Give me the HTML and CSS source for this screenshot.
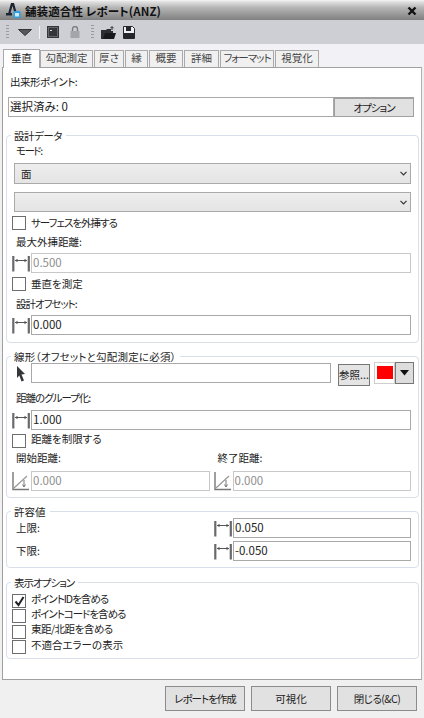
FILE: index.html
```html
<!DOCTYPE html>
<html lang="ja">
<head>
<meta charset="utf-8">
<title>舗装適合性レポート(ANZ)</title>
<link rel="stylesheet" href="styles.css">
</head>
<body>
<svg class="defs" width="0" height="0">
  <symbol id="dist" viewBox="0 0 18 20">
    <path d="M1.300 3v15.500M16.800 3v15.500" stroke="#6a6a6e" stroke-width="2.200" fill="none"/>
    <path d="M3 7.500h12" stroke="#555" stroke-width="1" fill="none"/>
    <path d="M3 7.500l2.500-1.700v3.400zM15 7.500l-2.500-1.700v3.400z" fill="#555"/>
  </symbol>
  <symbol id="slope" viewBox="0 0 18 20">
    <path d="M1 1v17.500h16" stroke="#777" stroke-width="1.400" fill="none"/>
    <path d="M2 17L15 5" stroke="#999" stroke-width="1.200" fill="none"/>
    <path d="M12 9v7M10.500 13.500l1.500 2.500 1.500-2.500" stroke="#777" fill="none"/>
  </symbol>
</svg>
<div class="window">
  <header class="titlebar">
    <svg class="appicon" width="15" height="15" viewBox="0 0 15 15">
      <path d="M2 11L5 0h3l3 11H8.800L6.500 3 4.200 11z" fill="#1d2433"/>
      <path d="M0 10h6v2.500H0z" fill="#1d2433"/>
      <rect x="7.500" y="8" width="7" height="7" rx="1" fill="#2f9fe0"/>
      <rect x="9" y="10" width="4" height="3.500" fill="#cfeaf8"/>
    </svg>
    <span class="title">舗装適合性 レポート(ANZ)</span>
    <svg class="close" width="10" height="10" viewBox="0 0 10 10"><path d="M1.500 1.500l7 7M8.500 1.500l-7 7" stroke="#111" stroke-width="2.400"/></svg>
  </header>
  <div class="toolbar">
    <span class="grip"></span>
    <svg class="tool tri" width="14" height="7" viewBox="0 0 14 7"><path d="M.5.500h13L7 6.500z" fill="#55575c" stroke="#333"/></svg>
    <span class="sep"></span>
    <svg class="tool" width="12" height="12" viewBox="0 0 12 12"><rect x=".5" y=".5" width="11" height="11" fill="#666" stroke="#33363b"/><rect x="2" y="2" width="8" height="8" fill="#33363b"/><path d="M3 4.500h2" stroke="#ddd"/></svg>
    <svg class="tool lock" width="10" height="12" viewBox="0 0 10 12"><path d="M2.500 5V3a2.500 2.500 0 0 1 5 0v2" fill="none" stroke="#7b7d82" stroke-width="1.400"/><rect x=".5" y="5" width="9" height="7" fill="#a3a5a9"/></svg>
    <span class="grip second"></span>
    <svg class="tool" width="15" height="13" viewBox="0 0 15 13"><path d="M0 4h5l1-1h4v2h2v8H0z" fill="#2b2d33"/><path d="M2 13l2-6h11l-2 6z" fill="#17181c"/><path d="M11 4V1M9.500 2.200L11 .5l1.500 1.700" stroke="#2b2d33" fill="none"/></svg>
    <svg class="tool save" width="12" height="13" viewBox="0 0 12 13"><path d="M.5.500h9l2 2v10H.5z" fill="#f0f0f2" stroke="#24262b"/><rect x="3" y="1" width="5" height="4" fill="#24262b"/><rect x="1" y="7" width="10" height="5.500" fill="#24262b"/></svg>
  </div>
  <nav class="tabs">
    <span class="tab active">垂直</span>
    <span class="tab w53">勾配測定</span>
    <span class="tab w30">厚さ</span>
    <span class="tab w23">縁</span>
    <span class="tab w34">概要</span>
    <span class="tab w35">詳細</span>
    <span class="tab w54 tight">フォーマット</span>
    <span class="tab w44">視覚化</span>
  </nav>
  <main class="panel">
    <div class="label first slight">出来形ポイント:</div>
    <div class="selrow">
      <div class="field selected">選択済み: 0</div>
      <button class="btn option tight" type="button">オプション</button>
    </div>

    <fieldset class="group design">
      <legend class="slight">設計データ</legend>
      <div class="label mode extra">モード:</div>
      <div class="select">面<svg class="chev" width="7" height="5" viewBox="0 0 7 5"><path d="M.5.800l3 3 3-3" fill="none" stroke="#333" stroke-width="1.200"/></svg></div>
      <div class="select second"><svg class="chev" width="7" height="5" viewBox="0 0 7 5"><path d="M.5.800l3 3 3-3" fill="none" stroke="#333" stroke-width="1.200"/></svg></div>
      <label class="check c1 tight"><span class="box"></span>サーフェスを外挿する</label>
      <div class="label l2">最大外挿距離:</div>
      <div class="inrow"><svg class="ico"><use href="#dist"/></svg><div class="field grow disabled">0.500</div></div>
      <label class="check c2"><span class="box"></span>垂直を測定</label>
      <div class="label l3 tight">設計オフセット:</div>
      <div class="inrow"><svg class="ico"><use href="#dist"/></svg><div class="field grow">0.000</div></div>
    </fieldset>

    <fieldset class="group align">
      <legend class="wide">線形（オフセットと勾配測定に必須）</legend>
      <div class="alignrow">
        <svg class="ico arrow" viewBox="0 0 18 20"><path d="M5 2l8 8-3.500.500 2.500 6-2.500 1-2.200-6L5 14z" fill="#33363b"/></svg>
        <div class="field alignfield"></div>
        <button class="btn browse" type="button">参照...</button>
        <div class="colour"><span class="swatch"><span class="red"></span></span><span class="drop"><svg width="9" height="6" viewBox="0 0 9 6"><path d="M0 0h9L4.500 5.500z" fill="#111"/></svg></span></div>
      </div>
      <div class="label l4 tight">距離のグループ化:</div>
      <div class="inrow in5"><svg class="ico"><use href="#dist"/></svg><div class="field grow">1.000</div></div>
      <label class="check c3"><span class="box"></span><span class="raised">距離を制限する</span></label>
      <div class="two">
        <div class="col">
          <div class="label">開始距離:</div>
          <div class="inrow"><svg class="ico"><use href="#slope"/></svg><div class="field grow disabled">0.000</div></div>
        </div>
        <div class="col">
          <div class="label">終了距離:</div>
          <div class="inrow"><svg class="ico"><use href="#slope"/></svg><div class="field grow disabled">0.000</div></div>
        </div>
      </div>
    </fieldset>

    <fieldset class="group tol">
      <legend>許容値</legend>
      <div class="tolrow"><span class="tollabel">上限:</span><svg class="ico"><use href="#dist"/></svg><div class="field grow">0.050</div></div>
      <div class="tolrow low"><span class="tollabel">下限:</span><svg class="ico"><use href="#dist"/></svg><div class="field grow">-0.050</div></div>
    </fieldset>

    <fieldset class="group show">
      <legend class="tight">表示オプション</legend>
      <label class="check s tight"><span class="box"><svg width="11" height="11" viewBox="0 0 11 11"><path d="M1.500 5.500l3 3.500 5-8" fill="none" stroke="#222" stroke-width="2"/></svg></span><span class="raised">ポイントIDを含める</span></label>
      <label class="check s tight"><span class="box"></span><span class="raised">ポイントコードを含める</span></label>
      <label class="check s slight"><span class="box"></span><span class="raised">東距/北距を含める</span></label>
      <label class="check s"><span class="box"></span><span class="raised">不適合エラーの表示</span></label>
    </fieldset>
  </main>
  <footer class="footer">
    <button class="btn foot tight" type="button">レポートを作成</button>
    <button class="btn foot" type="button">可視化</button>
    <button class="btn foot slight" type="button">閉じる(&amp;C)</button>
  </footer>
</div>
</body>
</html>
```
FILE: styles.css
```css
* { box-sizing: border-box; }
html, body { margin: 0; padding: 0; }
body {
  width: 424px;
  height: 718px;
  overflow: hidden;
  background: #f0f0f0;
  font-family: "Noto Sans CJK JP", "Noto Sans", sans-serif;
  font-size: 10.500px;
  line-height: 14px;
  color: #222;
  font-feature-settings: "palt";
}
.tight { letter-spacing: -1px; }
.slight { letter-spacing: -.5px; }
.extra { letter-spacing: -1.500px; }
.wide { letter-spacing: .2px; }
.defs { position: absolute; }
.window { display: flex; flex-direction: column; height: 718px; padding-top: 1px; }

.titlebar {
  height: 19px;
  display: flex;
  align-items: center;
  padding: 0 5px;
  background: linear-gradient(#e6e6e6, #b5b5b5 35%, #808080);
}
.appicon { margin-right: 4px; margin-left: 1px; }
.title { font-weight: 700; font-size: 11.500px; letter-spacing: .1px; color: #111; flex: 1; }
.close { margin-right: 2px; }

.toolbar {
  height: 24px;
  display: flex;
  align-items: center;
  padding-left: 6px;
  background: #cdcfd4;
}
.grip { width: 3px; height: 15px; background: repeating-linear-gradient(#9a9a9a 0 1px, transparent 1px 3px); }
.grip.second { margin-left: 11px; }
.sep { width: 1px; height: 13px; margin-left: 7px; background: #f2f2f2; }
.tool { margin-left: 7px; }
.tool.tri { margin-left: 9px; }
.tool.lock { margin-left: 11px; }
.tool.save { margin-left: 7px; }

.tabs {
  height: 23px;
  display: flex;
  align-items: flex-end;
  gap: 1px;
  padding-left: 3px;
  background: #f1f1f6;
}
.tab {
  height: 17px;
  width: 34px;
  text-align: center;
  border: 1px solid #a9a9a9;
  border-bottom: 0;
  background: #f0f0f0;
  color: #444;
  line-height: 14px;
  white-space: nowrap;
}
.tab.active { width: 37px; height: 19px; background: #fff; color: #222; margin-bottom: -1px; position: relative; z-index: 1; line-height: 16px; margin-right: -1px; }
.w53 { width: 53px; }
.w30 { width: 30px; }
.w23 { width: 23px; }
.w34 { width: 34px; }
.w35 { width: 35px; }
.w54 { width: 54px; }
.w44 { width: 44px; }

.panel {
  height: 613px;
  margin: 0 2px;
  padding: 7px 6px 0 4px;
  background: #fff;
  border: 1px solid #a0a0a0;
  border-right-color: #b0b0b0;
}
.label { height: 14px; padding-left: 2px; }
.first { padding-left: 3px; }
.selrow { display: flex; margin: 8px 0 0 1px; }
.field {
  height: 20px;
  border: 1px solid #a9a9a9;
  padding: 0 1px;
  font-size: 11.500px;
  line-height: 17px;
  background: #fff;
  color: #222;
}
.selected { width: 326px; }
.btn {
  font-family: inherit;
  font-feature-settings: inherit;
  border: 1px solid #8a8a8a;
  background: #e4e4e4;
  color: #222;
  font-size: 10.500px;
  line-height: 14px;
  padding: 0;
}
.option { width: 80px; height: 20px; border-color: #a0a0a0; border-width: 2px 1px 1px; background: #e1e1e1; }

.group {
  margin: 0 0 0 -1px;
  min-width: 0;
  width: 413px;
  border: 1px solid #d8dfe8;
  border-radius: 4px;
  padding: 0 7px 0 7px;
}
.group legend { margin-left: -3px; padding: 0 4px 0 3px; line-height: 13px; }
.design { margin-top: 12px; height: 214px; }
.align { margin-top: 7px; height: 148px; }
.tol { margin-top: 7px; height: 63px; }
.show { margin-top: 8px; height: 83px; }

.mode { margin-top: 2px; }
.select {
  height: 21px;
  margin-top: 5px;
  border: 1px solid #aaa;
  background: linear-gradient(#eeeeee, #e4e4e4);
  padding-left: 6px;
  line-height: 19px;
  display: flex;
  align-items: center;
}
.select.second { margin-top: 8px; height: 20px; }
.chev { margin: 0 3px 0 auto; }
.check { display: flex; align-items: center; height: 14px; margin-left: -2px; }
.box {
  width: 14px; height: 14px;
  border: 1px solid #6e6e6e;
  margin-right: 5px;
  flex: none;
  background: #fff;
  display: flex;
  align-items: center;
  justify-content: center;
}
.c1 { margin-top: 4px; }
.l2 { margin-top: 5px; }
.inrow { display: flex; align-items: center; margin-top: 4px; }
.in5 { margin-top: 5px; }
.ico { width: 18px; height: 20px; margin: 0 1px 0 -2px; flex: none; }
.grow { flex: 1; min-width: 0; }
.disabled { border-color: #c8c8c8; color: #8e8e8e; }
.c2 { margin-top: 4px; }
.l3 { margin-top: 6px; }
.alignrow { display: flex; align-items: center; height: 24px; margin-top: -2px; }
.arrow { margin-top: 1px; }
.alignfield { width: 300px; margin-right: 7px; flex: none; }
.browse { width: 32px; height: 22px; border: 1px solid #777; margin-right: 4px; margin-top: 3px; white-space: nowrap; overflow: hidden; flex: none; }
.colour { display: flex; width: 40px; height: 22px; margin-top: -1px; flex: none; }
.swatch { width: 21px; border: 1px solid #cfcfcf; background: #fff; display: flex; align-items: center; justify-content: center; }
.red { width: 16px; height: 13px; background: #f00; }
.drop { flex: 1; background: #ddd; border: 1px solid #777; display: flex; align-items: center; justify-content: center; }
.l4 { margin-top: 6px; }
.c3 { margin-top: 4px; }
.raised { position: relative; top: -2px; }
.two { display: flex; gap: 6px; margin-top: 3px; }
.col { flex: 1; }
.two .inrow { margin-top: 6px; }

.tolrow { display: flex; align-items: center; height: 20px; margin-top: 0; }
.tolrow.low { margin-top: 3px; }
.tollabel { width: 202px; padding-left: 2px; flex: none; }
.s { height: 15.300px; }
.group legend + .s { margin-top: 4px; }
.s .box { margin-top: 1px; }

.footer { flex: 1; display: flex; justify-content: flex-end; gap: 6px; padding: 6px 7px 0 0; }
.foot { width: 80px; height: 25px; background: #e1e1e1; border-color: #8c8c8c; }
```
